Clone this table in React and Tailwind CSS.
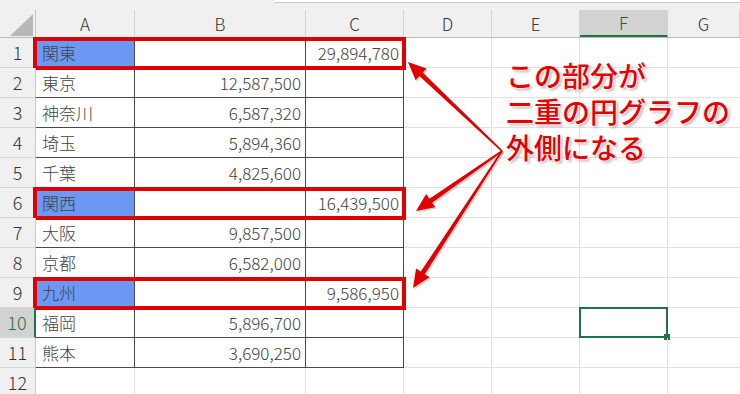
import React from "react";

const COLS = [
  { key: "A", w: "w-[99px]" },
  { key: "B", w: "w-[171px]" },
  { key: "C", w: "w-[98px]" },
  { key: "D", w: "w-[88px]" },
  { key: "E", w: "w-[88px]" },
  { key: "F", w: "w-[88px]" },
  { key: "G", w: "flex-1" },
];

const ROWS = [
  ["関東", "", "29,894,780", true],
  ["東京", "12,587,500", ""],
  ["神奈川", "6,587,320", ""],
  ["埼玉", "5,894,360", ""],
  ["千葉", "4,825,600", ""],
  ["関西", "", "16,439,500", true],
  ["大阪", "9,857,500", ""],
  ["京都", "6,582,000", ""],
  ["九州", "", "9,586,950", true],
  ["福岡", "5,896,700", ""],
  ["熊本", "3,690,250", ""],
  null,
];

function arrowPoints(ox, oy, tx, ty) {
  const dx = tx - ox;
  const dy = ty - oy;
  const L = Math.hypot(dx, dy);
  const ux = dx / L;
  const uy = dy / L;
  const nx = -uy;
  const ny = ux;
  const hl = 18;
  const hw = 8;
  const bx = tx - ux * hl;
  const by = ty - uy * hl;
  const w0 = 0.8;
  const w1 = 2.4;
  const p = [
    [ox + nx * w0, oy + ny * w0],
    [bx + nx * w1, by + ny * w1],
    [bx + nx * hw, by + ny * hw],
    [tx, ty],
    [bx - nx * hw, by - ny * hw],
    [bx - nx * w1, by - ny * w1],
    [ox - nx * w0, oy - ny * w0],
  ];
  return p.map((q) => q[0].toFixed(1) + "," + q[1].toFixed(1)).join(" ");
}

const ARROWS = [
  [502, 151, 408, 62],
  [502, 151, 416, 211],
  [502, 151, 413, 288],
];

function Cell({ children, className = "" }) {
  return <div className={"h-full shrink-0 flex items-center " + className}>{children}</div>;
}

export default function App() {
  return (
    <div className="relative w-[740px] h-[394px] overflow-hidden bg-white [font-family:'Noto_Sans_CJK_JP','Noto_Sans',sans-serif] text-[#424242]">
      {/* top strip */}
      <div className="flex h-[3px] bg-[#f0f0f0]">
        <div className="w-[275px]" />
        <div className="flex-1 bg-white border-b border-[#c8c8c8]" />
      </div>
      {/* header spacer */}
      <div className="h-[7px] bg-[#f0f0f0]" />
      {/* column header */}
      <div className="flex h-[28px] bg-[#f0f0f0] border-b border-[#bdbdbd]">
        <div className="w-[36px] shrink-0 h-full relative border-r border-[#c8c8c8]">
          <svg className="absolute left-[10px] top-[4px]" width="23" height="22" viewBox="0 0 23 22">
            <polygon points="23,0 23,22 0,22" fill="#b8b8b8" />
          </svg>
        </div>
        {COLS.map((c) => (
          <div
            key={c.key}
            className={
              c.w +
              " shrink-0 h-full flex items-center justify-center text-[17px] font-light border-r border-[#d4d4d4] " +
              (c.key === "F"
                ? "bg-[#d2d2d2] text-[#1e5e38] border-b-2 border-b-[#217346]"
                : "text-[#333]")
            }
          >
            {c.key}
          </div>
        ))}
      </div>

      {/* rows */}
      {ROWS.map((r, i) => {
        const n = i + 1;
        const inTable = r !== null;
        const sel = n === 10;
        const bd = inTable ? "border-[#4a4a4a]" : "border-[#e1e1e1]";
        return (
          <div key={n} className="relative flex h-[30px] font-light">
            <Cell
              className={
                "w-[36px] justify-center text-[18px] border-b border-[#d6d6d6] " +
                (sel
                  ? "bg-[#d2d2d2] text-[#217346] border-r-2 border-r-[#217346]"
                  : "bg-[#f0f0f0] text-[#333] border-r border-r-[#c8c8c8]")
              }
            >
              {n}
            </Cell>
            <Cell
              className={
                "w-[99px] px-[6px] text-[17px] border-r border-b " +
                bd +
                (r && r[3] ? " bg-[#6b98f2]" : "")
              }
            >
              {r ? r[0] : ""}
            </Cell>
            <Cell className={"w-[171px] justify-end px-[4px] text-[17px] border-r border-b " + bd}>
              {r ? r[1] : ""}
            </Cell>
            <Cell className={"w-[98px] justify-end px-[4px] text-[17px] border-r border-b " + bd}>
              {r ? r[2] : ""}
            </Cell>
            <Cell className="w-[88px] border-r border-b border-[#e1e1e1]" />
            <Cell className="w-[88px] border-r border-b border-[#e1e1e1]" />
            <Cell className="w-[88px] relative border-r border-b border-[#e1e1e1]">
              {sel && (
                <div className="absolute left-[-1px] top-[-1px] w-[89px] h-[31px] border-2 border-[#217346]">
                  <div className="absolute right-[-4px] bottom-[-4px] w-[6px] h-[6px] bg-[#217346]" />
                </div>
              )}
            </Cell>
            <Cell className="flex-1 border-b border-[#e1e1e1]" />
            {r && r[3] && (
              <div className="absolute left-[33px] top-[-1px] w-[373px] h-[33px] border-[4px] border-[#e00000] pointer-events-none" />
            )}
          </div>
        );
      })}

      {/* arrows */}
      <svg className="absolute left-0 top-0 pointer-events-none" width="740" height="394" viewBox="0 0 740 394">
        {ARROWS.map((a, i) => (
          <polygon
            key={"s" + i}
            points={arrowPoints(a[0] + 1.5, a[1] + 1.5, a[2] + 1.5, a[3] + 1.5)}
            fill="#000"
            opacity="0.18"
          />
        ))}
        {ARROWS.map((a, i) => (
          <polygon key={i} points={arrowPoints(a[0], a[1], a[2], a[3])} fill="#e00000" />
        ))}
      </svg>

      {/* annotation */}
      <div className="absolute left-[506px] top-[57px] text-[28px] leading-[36px] font-medium text-[#e60000] whitespace-nowrap [text-shadow:0_0_2px_#fff,0_0_2px_#fff,0_0_3px_#fff,2px_2px_3px_rgba(0,0,0,0.35)]">
        <div>この部分が</div>
        <div>二重の円グラフの</div>
        <div>外側になる</div>
      </div>
    </div>
  );
}
